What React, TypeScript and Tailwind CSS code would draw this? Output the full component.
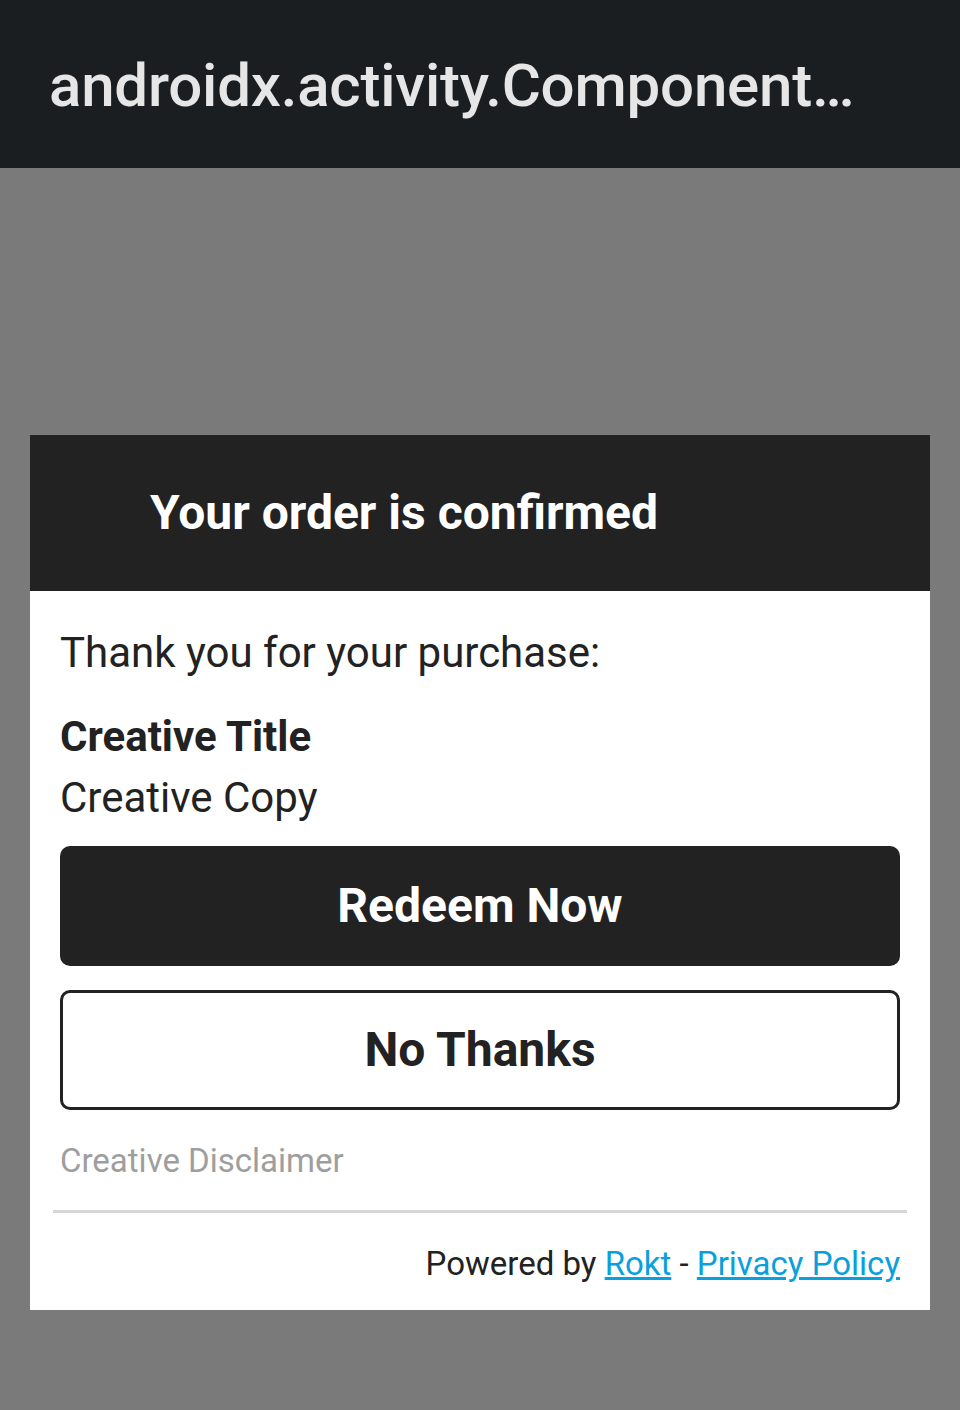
import React from 'react';

const App = () => {
  return (
    <div className="w-[960px] h-[1410px] flex flex-col bg-[#7a7a7a] font-['Roboto',sans-serif]">
      {/* Toolbar */}
      <div className="h-[168px] bg-[#1b1e21] flex items-center px-[49px] pt-[4px]">
        <h1 className="text-[60px] leading-none font-medium tracking-[-0.2px] text-[#e6e6e6] whitespace-nowrap">
          androidx.activity.Component…
        </h1>
      </div>

      {/* Overlay */}
      <div className="flex-1 px-[30px] pt-[267px]">
        <div className="bg-white flex flex-col">
          <div className="h-[156px] bg-[#222222] flex items-center pl-[120px]">
            <h2 className="text-[48px] leading-none font-bold text-white">Your order is confirmed</h2>
          </div>

          <div className="px-[30px] pt-[36px] flex flex-col">
            <p className="text-[42px] leading-[52px] text-[#222222]">Thank you for your purchase:</p>
            <p className="mt-[32px] text-[42px] leading-[52px] font-bold text-[#222222]">Creative Title</p>
            <p className="mt-[9px] text-[42px] leading-[52px] text-[#222222]">Creative Copy</p>

            <button className="mt-[22px] h-[120px] w-full rounded-[10px] bg-[#222222] text-white text-[48px] font-bold">
              Redeem Now
            </button>
            <button className="mt-[24px] h-[120px] w-full rounded-[10px] border-[3px] border-[#222222] bg-white text-[#222222] text-[48px] font-bold">
              No Thanks
            </button>

            <p className="mt-[30px] text-[33px] leading-[42px] text-[#9e9e9e]">Creative Disclaimer</p>
          </div>

          <div className="mx-[23px] mt-[28px] h-[3px] bg-[#d6d6d6]" />

          <div className="px-[30px] pt-[30px] pb-[25px] flex justify-end text-[33px] leading-[42px] text-[#222222]">
            <span>
              Powered by{' '}
              <a className="text-[#0aa0dc] underline">Rokt</a>
              {' - '}
              <a className="text-[#0aa0dc] underline">Privacy Policy</a>
            </span>
          </div>
        </div>
      </div>
    </div>
  );
};

export default App;
